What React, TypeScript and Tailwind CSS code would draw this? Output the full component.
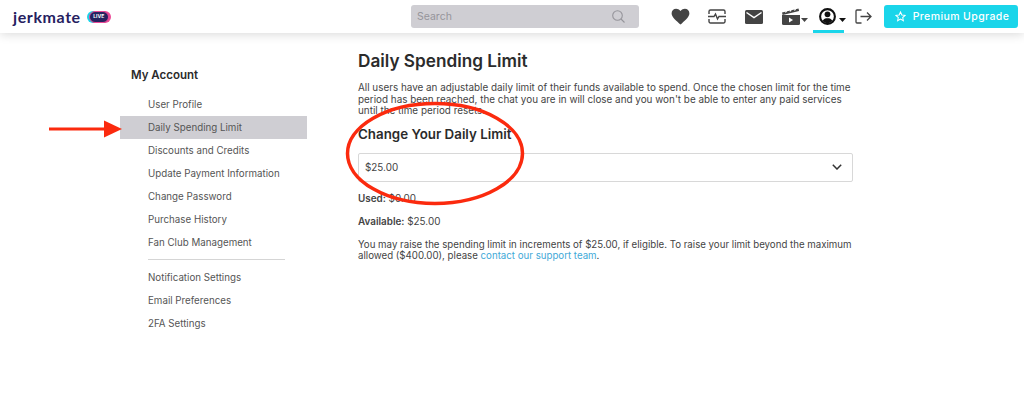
import React from "react";

const font = { fontFamily: "Inter, 'Liberation Sans', sans-serif" };

function Caret({ color = "#444" }: { color?: string }) {
  return <svg width="7" height="4" viewBox="0 0 7 4" className="block"><path d="M0 0h7L3.500 4z" fill={color} /></svg>;
}

function Icons() {
  return (
    <div className="flex items-center h-[33px]">
      <div className="w-[38px] flex justify-center">
        <svg width="19" height="17" viewBox="0 0 24 22"><path d="M12 21.500 10.300 20C4.200 14.500 0.500 11.100 0.500 6.900 0.500 3.500 3.100 1 6.400 1c1.900 0 3.900.9 5.600 3 1.700-2.100 3.700-3 5.600-3 3.300 0 5.900 2.500 5.900 5.900 0 4.200-3.700 7.600-9.800 13.100z" fill="#444" /></svg>
      </div>
      <div className="w-[36px] flex justify-center">
        <svg width="18" height="15" viewBox="0 0 18 15" fill="none" stroke="#444" strokeWidth="1.400"><path d="M1 5V2.500A1.500 1.500 0 0 1 2.500 1h13A1.500 1.500 0 0 1 17 2.500V5M1 10v2.500A1.500 1.500 0 0 0 2.500 14h13a1.500 1.500 0 0 0 1.500-1.500V10" /><path d="M0 7.500h6l1.500-2.500 2 5 1.500-2.500h7" /></svg>
      </div>
      <div className="w-[38px] flex justify-center">
        <svg width="18" height="14" viewBox="0 0 18 14"><rect width="18" height="14" rx="1.500" fill="#444" /><path d="M1.500 2.500 9 7.500l7.500-5" fill="none" stroke="#fff" strokeWidth="1.500" /></svg>
      </div>
      <div className="w-[40px] h-full flex items-center pl-[9px] relative">
        <svg width="18" height="17" viewBox="0 0 18 17"><path d="M0 7h18v8.500a1.500 1.500 0 0 1-1.500 1.500h-15A1.500 1.500 0 0 1 0 15.500z" fill="#444" /><path d="M0 4.500 16.500.5l.6 2.600L.6 7z" fill="#444" /><path d="M3.500 4.500 5 2M8 3.500 9.500 1M12.500 2.500 14 0" stroke="#fff" strokeWidth="1.200" /><path d="M7 9.500v5l4-2.500z" fill="#fff" /></svg>
        <span className="absolute left-[28px] top-[18px]"><Caret /></span>
      </div>
      <div className="w-[31px] h-full flex justify-center items-center relative border-b-[3px] border-[#1ad5ea]">
        <svg width="17" height="17" viewBox="0 0 17 17" className="mr-[3px] mt-[2px]"><circle cx="8.500" cy="8.500" r="7.400" fill="none" stroke="#111" strokeWidth="2.100" /><circle cx="8.500" cy="6.300" r="2.900" fill="#111" /><path d="M3.500 13c1-2.300 3-2.800 5-2.800s4 .5 5 2.800l-5 3z" fill="#111" /></svg>
        <span className="absolute left-[26px] top-[18px]"><Caret color="#111" /></span>
      </div>
      <div className="w-[40px] flex justify-center pr-[1px]">
        <svg width="17" height="15" viewBox="0 0 17 15" fill="none" stroke="#444" strokeWidth="1.300"><path d="M6.500 1H2a1 1 0 0 0-1 1v11a1 1 0 0 0 1 1h4.500" /><path d="M5.500 7.500H16M12 3.500l4 4-4 4" /></svg>
      </div>
    </div>
  );
}

const groupOne = ["User Profile", "Daily Spending Limit", "Discounts and Credits", "Update Payment Information", "Change Password", "Purchase History", "Fan Club Management"];
const groupTwo = ["Notification Settings", "Email Preferences", "2FA Settings"];

function Item({ label }: { label: string }) {
  const active = label === "Daily Spending Limit";
  return (
    <div className={`h-[23px] flex items-center pl-[28px] pt-[1px] text-[9.750px] text-[#555] ${active ? "bg-[#cfced3]" : ""}`}>{label}</div>
  );
}

export default function App() {
  return (
    <div style={font} className="relative w-[1024px] h-[414px] overflow-hidden bg-white">
      <header className="h-[33px] flex items-center bg-white shadow-[0_1px_10px_rgba(0,0,0,0.16)] relative">
        <div className="w-[411px] pl-[13px] flex items-center gap-[8px]">
          <span className="text-[16px] font-bold text-[#26215f] leading-none tracking-[0.6px]" style={{ fontFamily: "Lato, sans-serif" }}>jerkmate</span>
          <span className="h-[12px] w-[20px] rounded-full bg-[#26215f] border border-[#ec4a97] flex items-center justify-center text-[5px] font-bold text-white shadow-[-2px_0_0_#1ad5ea,2px_0_0_#ec4a97]">LIVE</span>
        </div>
        <div className="w-[228px] h-[23px] rounded-[3px] bg-[#cfced3] flex items-center justify-between pl-[6px] pr-[14px] text-[10.500px] text-[#96959b]">
          <span>Search</span>
          <svg width="13" height="13" viewBox="0 0 13 13" fill="none" stroke="#96959b" strokeWidth="1.100"><circle cx="5.500" cy="5.500" r="4.800" /><path d="m9 9 3.500 3.500" /></svg>
        </div>
        <div className="ml-[22px]"><Icons /></div>
        <button className="w-[134px] h-[23px] rounded-[3px] bg-[#1ad5ea] text-white flex items-center justify-center gap-[7px] pl-[2px] text-[10.500px] font-medium tracking-[0.4px]">
          <svg width="11" height="11" viewBox="0 0 24 24" fill="none" stroke="#fff" strokeWidth="2.200"><path d="m12 2 3 6.600 7.200.8-5.400 4.800 1.500 7.100L12 17.700l-6.300 3.600 1.500-7.100L1.800 9.400 9 8.600z" /></svg>
          Premium Upgrade
        </button>
      </header>

      <div className="flex">
        <aside className="ml-[120px] w-[187px] pt-[35px] shrink-0">
          <h2 className="pl-[11px] text-[11.500px] font-semibold text-[#2b2b2b] leading-[14px] mb-[11px]">My Account</h2>
          {groupOne.map((l) => <Item key={l} label={l} />)}
          <div className="ml-[28px] mr-[22px] mt-[5px] mb-[6px] border-t border-[#d5d5d5]" />
          {groupTwo.map((l) => <Item key={l} label={l} />)}
        </aside>

        <main className="ml-[51px] w-[495px] pt-[17px] text-[#444]">
          <h1 className="text-[17.200px] font-semibold text-[#2b2b2b] leading-[21px] mb-[10px]">Daily Spending Limit</h1>
          <p className="text-[9.900px] leading-[11.500px] w-[495px] pt-[1px]">All users have an adjustable daily limit of their funds available to spend. Once the chosen limit for the time period has been reached, the chat you are in will close and you won't be able to enter any paid services until the time period resets.</p>
          <h2 className="mt-[9px] text-[13.350px] font-semibold text-[#2b2b2b] leading-[16px]">Change Your Daily Limit</h2>
          <div className="mt-[11px] h-[29px] border border-[#d8d8d8] rounded-[2px] flex items-center justify-between pl-[6px] pr-[10px] text-[9.900px] text-[#444]">
            <span className="pt-[1px]">$25.00</span>
            <svg width="10" height="6" viewBox="0 0 10 6" fill="none" stroke="#333" strokeWidth="1.500"><path d="m.8.8 4.200 4.200L9.200.8" /></svg>
          </div>
          <p className="mt-[10px] text-[9.900px] leading-[13px]"><b className="font-semibold">Used:</b> $0.00</p>
          <p className="mt-[10px] text-[9.900px] leading-[13px]"><b className="font-semibold">Available:</b> $25.00</p>
          <p className="mt-[11px] text-[9.700px] leading-[11.500px]">You may raise the spending limit in increments of $25.00, if eligible. To raise your limit beyond the maximum allowed ($400.00), please <span className="text-[#3fa9d8]">contact our support team</span>.</p>
        </main>
      </div>

      <svg className="absolute left-0 top-0 pointer-events-none" width="1024" height="414" viewBox="0 0 1024 414" fill="none">
        <path d="M49 129h56" stroke="#fb2a0e" strokeWidth="3" />
        <path d="M104 120.500l18 8.500-18 8.500z" fill="#fb2a0e" />
        <ellipse cx="435" cy="153.500" rx="87.500" ry="50" stroke="#fb2a0e" strokeWidth="3.500" />
      </svg>
    </div>
  );
}
